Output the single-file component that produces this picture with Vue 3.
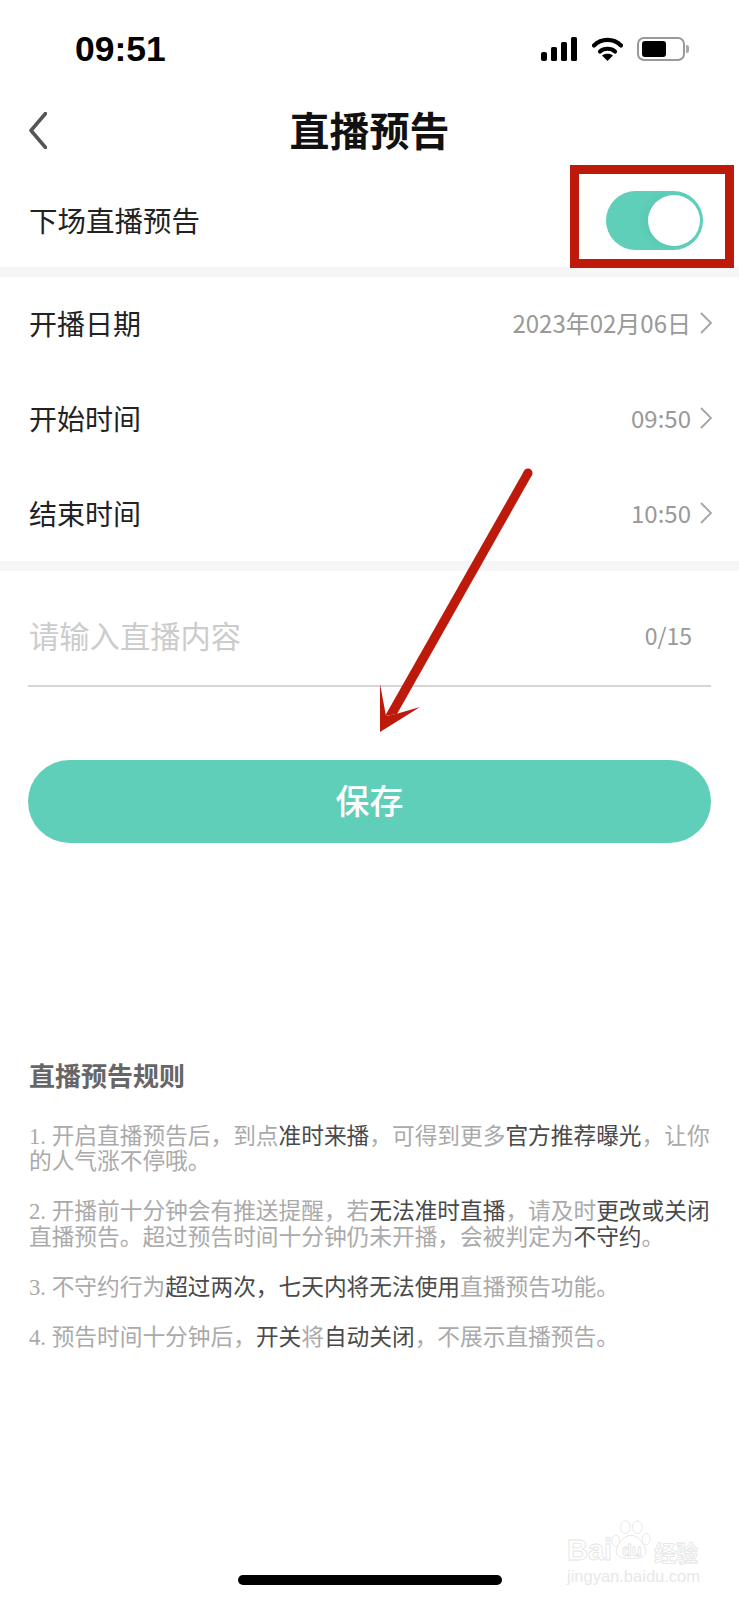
<script setup>
const rows = [
  { label: '开播日期', value: '2023年02月06日' },
  { label: '开始时间', value: '09:50' },
  { label: '结束时间', value: '10:50' }
]
const rules = [
  [['1. 开启直播预告后，到点', 0], ['准时来播', 1], ['，可得到更多', 0], ['官方推荐曝光', 1], ['，让你', 0], ['的人气涨不停哦。', 0]],
  [['2. 开播前十分钟会有推送提醒，若', 0], ['无法准时直播', 1], ['，请及时', 0], ['更改或关闭', 1], ['直播预告。超过预告时间十分钟仍未开播，会被判定为', 0], ['不守约', 1], ['。', 0]],
  [['3. 不守约行为', 0], ['超过两次，七天内将无法使用', 1], ['直播预告功能。', 0]],
  [['4. 预告时间十分钟后，', 0], ['开关', 1], ['将', 0], ['自动关闭', 1], ['，不展示直播预告。', 0]]
]
</script>

<template>
  <div class="page">
    <header class="status">
      <span class="time">09:51</span>
      <div class="status-icons">
        <svg class="signal" width="36" height="24" viewBox="0 0 36 24">
          <rect x="0" y="15" width="6" height="9" rx="2" />
          <rect x="10" y="10" width="6" height="14" rx="1.5" />
          <rect x="20" y="5" width="6" height="19" rx="1.5" />
          <rect x="30" y="0" width="6" height="24" rx="1.5" />
        </svg>
        <svg class="wifi" width="31" height="24" viewBox="0 0 31 24">
          <path d="M2 8.5C9.5 1 21.500 1 29 8.500" fill="none" stroke="#000" stroke-width="4.200" stroke-linecap="round" />
          <path d="M8 14.500C12 10.800 19 10.800 23 14.500" fill="none" stroke="#000" stroke-width="4.200" stroke-linecap="round" />
          <path d="M15.500 24L10 18.500C13 16 18 16 21 18.500Z" fill="#000" />
        </svg>
        <div class="battery">
          <div class="battery-body"><div class="battery-fill"></div></div>
          <div class="battery-nub"></div>
        </div>
      </div>
    </header>

    <nav class="nav">
      <svg class="back" width="18" height="37" viewBox="0 0 18 37">
        <path d="M16.500 1.500L2 18.500L16.500 35.500" fill="none" stroke="#555" stroke-width="3.500" stroke-linecap="round" stroke-linejoin="round" />
      </svg>
      <h1 class="title">直播预告</h1>
    </nav>

    <section class="row toggle-row">
      <span class="toggle-label">下场直播预告</span>
      <div class="toggle"><div class="thumb"></div></div>
    </section>
    <div class="gap"></div>

    <section>
      <div v-for="row in rows" :key="row.label" class="row">
        <span class="label">{{ row.label }}</span>
        <div class="value-wrap">
          <span class="value">{{ row.value }}</span>
          <svg width="12" height="22" viewBox="0 0 12 22">
            <path d="M1 1L11 11L1 21" fill="none" stroke="#a5a5a5" stroke-width="1.800" />
          </svg>
        </div>
      </div>
    </section>
    <div class="gap"></div>

    <section class="input-row">
      <span class="placeholder">请输入直播内容</span>
      <span class="count">0/15</span>
    </section>

    <button class="save">保存</button>

    <section class="rules">
      <h2 class="rules-title">直播预告规则</h2>
      <p v-for="(rule, i) in rules" :key="i" class="rule">
        <span v-for="(part, j) in rule" :key="j" :class="{ strong: part[1] }">{{ part[0] }}</span>
      </p>
    </section>

    <div class="home-bar"></div>

    <div class="red-box"></div>
    <svg class="arrow" width="739" height="1600" viewBox="0 0 739 1600">
      <circle cx="528" cy="473" r="4.500" fill="#bd1a0c" />
      <path d="M524 471L532 475L397 714L385 716Z" fill="#bd1a0c" />
      <path d="M380 732L380 684L386 716L396 714L420 707Z" fill="#bd1a0c" />
    </svg>

    <div class="watermark">
      <svg class="paw" width="40" height="40" viewBox="0 0 50 50">
        <g fill="#fff" stroke="#e6e6e6" stroke-width="1.200">
          <ellipse cx="6" cy="26" rx="5" ry="7" />
          <ellipse cx="18" cy="9" rx="6" ry="8" />
          <ellipse cx="33" cy="9" rx="6" ry="8" />
          <ellipse cx="44" cy="24" rx="5" ry="7" />
          <path d="M25 19C15 19 4 35 7 43C10 50 40 50 43 43C46 35 35 19 25 19Z" />
        </g>
      </svg>
      <span class="wm-bai">Bai</span>
      <span class="wm-du">du</span>
      <span class="wm-cn">经验</span>
      <div class="wm-url">jingyan.baidu.com</div>
    </div>
  </div>
</template>

<style scoped>
.page {
  position: relative;
  width: 739px;
  height: 1600px;
  overflow: hidden;
  background: #fff;
  font-family: "Noto Sans CJK SC", "Liberation Sans", sans-serif;
  color: #222;
}
.status {
  height: 88px;
  box-sizing: border-box;
  padding: 37px 50px 0 75px;
  display: flex;
  justify-content: space-between;
  align-items: flex-start;
}
.time {
  font-family: "Liberation Sans", sans-serif;
  font-weight: 700;
  font-size: 35.500px;
  line-height: 24px;
  color: #000;
}
.status-icons {
  display: flex;
  align-items: center;
  gap: 14px;
}
.signal { fill: #000; margin-right: 1px; }
.battery { display: flex; align-items: center; gap: 1px; }
.battery-body {
  width: 48px;
  height: 24px;
  box-sizing: border-box;
  border: 2px solid #999;
  border-radius: 7px;
  padding: 2px 3px;
}
.battery-fill {
  width: 24px;
  height: 16px;
  background: #000;
  border-radius: 3px;
}
.battery-nub {
  width: 3px;
  height: 8px;
  background: #aaa;
  border-radius: 0 2px 2px 0;
}
.nav {
  position: relative;
  height: 85px;
  display: flex;
  align-items: center;
  justify-content: center;
}
.back {
  position: absolute;
  left: 29px;
  top: 24px;
}
.title {
  margin: -4px 0 0;
  font-size: 40px;
  line-height: 56px;
  font-weight: 700;
  color: #111;
}
.row {
  height: 94.670px;
  box-sizing: border-box;
  padding: 0 27px 2px 29px;
  display: flex;
  align-items: center;
  justify-content: space-between;
}
.toggle-row {
  height: 94px;
  padding: 0 36px 0 29px;
}
.toggle-label {
  font-size: 28.500px;
  line-height: 40px;
}
.toggle {
  width: 97px;
  height: 59px;
  box-sizing: border-box;
  padding: 4px 3px 4px 42px;
  border-radius: 30px;
  background: #5fcfb9;
}
.thumb {
  width: 52px;
  height: 51px;
  border-radius: 50%;
  background: #fff;
  box-shadow: -5px 0 8px rgba(0, 0, 0, 0.04);
}
.gap {
  height: 10px;
  background: #f6f6f6;
}
.label {
  font-size: 28px;
  line-height: 40px;
}
.value-wrap {
  display: flex;
  align-items: center;
  gap: 9px;
}
.value {
  font-size: 24px;
  line-height: 32px;
  color: #999;
}
.input-row {
  height: 116px;
  box-sizing: border-box;
  margin: 0 28px;
  padding: 14px 19px 0 1px;
  border-bottom: 2px solid #d5d5d5;
  display: flex;
  align-items: center;
  justify-content: space-between;
}
.placeholder {
  font-size: 30.300px;
  line-height: 42px;
  color: #ccc;
}
.count {
  font-size: 23px;
  line-height: 32px;
  color: #999;
}
.save {
  display: block;
  width: 683px;
  height: 83px;
  margin: 73px 28px 0;
  padding: 0 0 4px;
  border: 0;
  border-radius: 42px;
  background: #60cfb9;
  color: #fff;
  font-family: inherit;
  font-size: 34px;
  font-weight: 500;
}
.rules {
  margin: 214px 28px 0 29px;
}
.rules-title {
  margin: 0 0 31px;
  font-size: 26px;
  line-height: 36px;
  font-weight: 700;
  color: #666;
}
.rule {
  margin: 0 0 24.500px;
  font-family: "Liberation Serif", "Noto Sans CJK SC", serif;
  font-size: 22.700px;
  line-height: 25.500px;
  color: #aaa;
}
.strong { color: #4a4a4a; }
.home-bar {
  position: absolute;
  left: 238px;
  top: 1575px;
  width: 264px;
  height: 10px;
  border-radius: 5px;
  background: #000;
}
.red-box {
  position: absolute;
  left: 570px;
  top: 165px;
  width: 164px;
  height: 103px;
  box-sizing: border-box;
  border: 9px solid #bd1a0c;
}
.arrow {
  position: absolute;
  left: 0;
  top: 0;
  pointer-events: none;
}
.watermark {
  position: absolute;
  left: 567px;
  top: 1520px;
  width: 132px;
  height: 62px;
}
.paw {
  position: absolute;
  left: 44px;
  top: 0;
}
.wm-bai,
.wm-du,
.wm-cn {
  position: absolute;
  white-space: nowrap;
  color: #fff;
  -webkit-text-stroke: 0.8px #e4e4e4;
  font-family: "Liberation Sans", sans-serif;
  font-weight: 700;
}
.wm-bai { left: 0; top: 15px; font-size: 29px; line-height: 30px; }
.wm-du { left: 55px; top: 22px; font-size: 16px; line-height: 18px; }
.wm-cn {
  left: 87px;
  top: 18px;
  font-size: 22px;
  line-height: 26px;
  font-family: "Noto Sans CJK SC", sans-serif;
}
.wm-url {
  position: absolute;
  left: 0;
  top: 47px;
  font-family: "Liberation Sans", sans-serif;
  font-size: 16.500px;
  line-height: 18px;
  color: #e8e8e8;
  white-space: nowrap;
}
</style>
